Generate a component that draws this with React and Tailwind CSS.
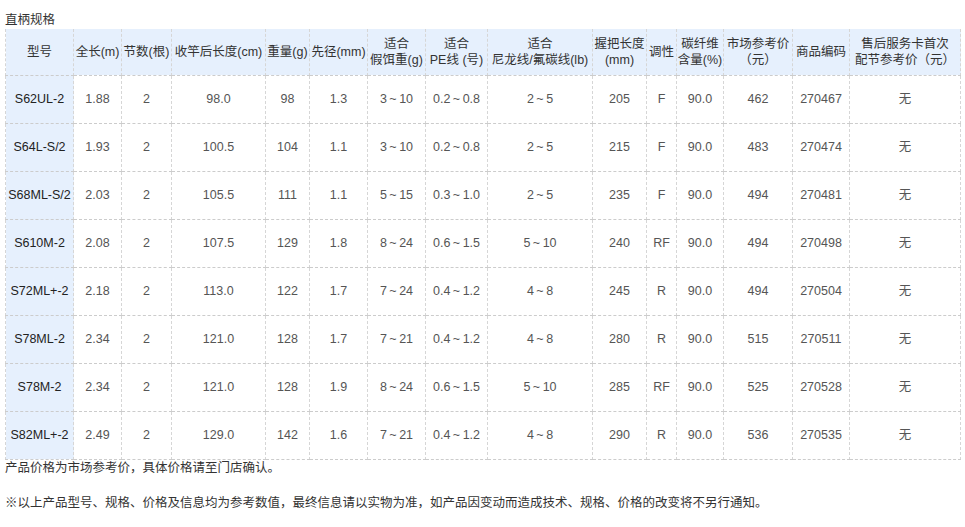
const headers = [
  { w: 68, label: ['型号'] },
  { w: 48, label: ['全长(m)'] },
  { w: 50, label: ['节数(根)'] },
  { w: 94, label: ['收竿后长度(cm)'] },
  { w: 44, label: ['重量(g)'] },
  { w: 58, label: ['先径(mm)'] },
  { w: 58, label: ['适合', '假饵重(g)'] },
  { w: 62, label: ['适合', 'PE线 (号)'] },
  { w: 105, label: ['适合', '尼龙线/氟碳线(lb)'] },
  { w: 54, label: ['握把长度', '(mm)'] },
  { w: 30, label: ['调性'] },
  { w: 47, label: ['碳纤维', '含量(%)'] },
  { w: 69, label: ['市场参考价', '（元）'] },
  { w: 57, label: ['商品编码'] },
  { w: 111, label: ['售后服务卡首次', '配节参考价（元）'] },
];

// thin spaces around the tilde, like the source page's range marks
const t = (a, b) => `${a}\u2009~\u2009${b}`;

const rows = [
  ['S62UL-2', '1.88', '2', '98.0', '98', '1.3', t(3, 10), t('0.2', '0.8'), t(2, 5), '205', 'F', '90.0', '462', '270467', '无'],
  ['S64L-S/2', '1.93', '2', '100.5', '104', '1.1', t(3, 10), t('0.2', '0.8'), t(2, 5), '215', 'F', '90.0', '483', '270474', '无'],
  ['S68ML-S/2', '2.03', '2', '105.5', '111', '1.1', t(5, 15), t('0.3', '1.0'), t(2, 5), '235', 'F', '90.0', '494', '270481', '无'],
  ['S610M-2', '2.08', '2', '107.5', '129', '1.8', t(8, 24), t('0.6', '1.5'), t(5, 10), '240', 'RF', '90.0', '494', '270498', '无'],
  ['S72ML+-2', '2.18', '2', '113.0', '122', '1.7', t(7, 24), t('0.4', '1.2'), t(4, 8), '245', 'R', '90.0', '494', '270504', '无'],
  ['S78ML-2', '2.34', '2', '121.0', '128', '1.7', t(7, 21), t('0.4', '1.2'), t(4, 8), '280', 'R', '90.0', '515', '270511', '无'],
  ['S78M-2', '2.34', '2', '121.0', '128', '1.9', t(8, 24), t('0.6', '1.5'), t(5, 10), '285', 'RF', '90.0', '525', '270528', '无'],
  ['S82ML+-2', '2.49', '2', '129.0', '142', '1.6', t(7, 21), t('0.4', '1.2'), t(4, 8), '290', 'R', '90.0', '536', '270535', '无'],
];

const cell = 'border-x border-dashed border-x-[#d6d6d6] border-b border-b-[#cccccc] text-center align-middle p-0';

export default function App() {
  return (
    <div
      className="min-h-screen bg-white pl-[5px] pt-[12px] text-[12.5px] leading-4 text-[#333]"
      style={{ fontFamily: '"Liberation Sans", "Noto Sans CJK SC", sans-serif' }}
    >
      <div className="h-[17px]">直柄规格</div>

      <table className="table-fixed border-collapse w-[955px]">
        <colgroup>
          {headers.map((h, i) => (
            <col key={i} style={{ width: h.w }} />
          ))}
        </colgroup>
        <thead>
          <tr className="h-[46px] bg-[#e6f0fd]">
            {headers.map((h, i) => (
              <th key={i} className={`${cell} font-normal text-[#333] whitespace-nowrap`}>
                {h.label.map((l, j) => (
                  <div key={j}>{l}</div>
                ))}
              </th>
            ))}
          </tr>
        </thead>
        <tbody>
          {rows.map((r, i) => (
            <tr key={i} className="h-[48px]">
              {r.map((v, j) => (
                <td
                  key={j}
                  className={`${cell} whitespace-nowrap ${j === 0 ? 'bg-[#e6f0fd] text-[#222]' : 'text-[#555]'}`}
                >
                  {v}
                </td>
              ))}
            </tr>
          ))}
        </tbody>
      </table>

      <p>产品价格为市场参考价，具体价格请至门店确认。</p>
      <p className="mt-[19px]">※以上产品型号、规格、价格及信息均为参考数值，最终信息请以实物为准，如产品因变动而造成技术、规格、价格的改变将不另行通知。</p>
    </div>
  );
}
